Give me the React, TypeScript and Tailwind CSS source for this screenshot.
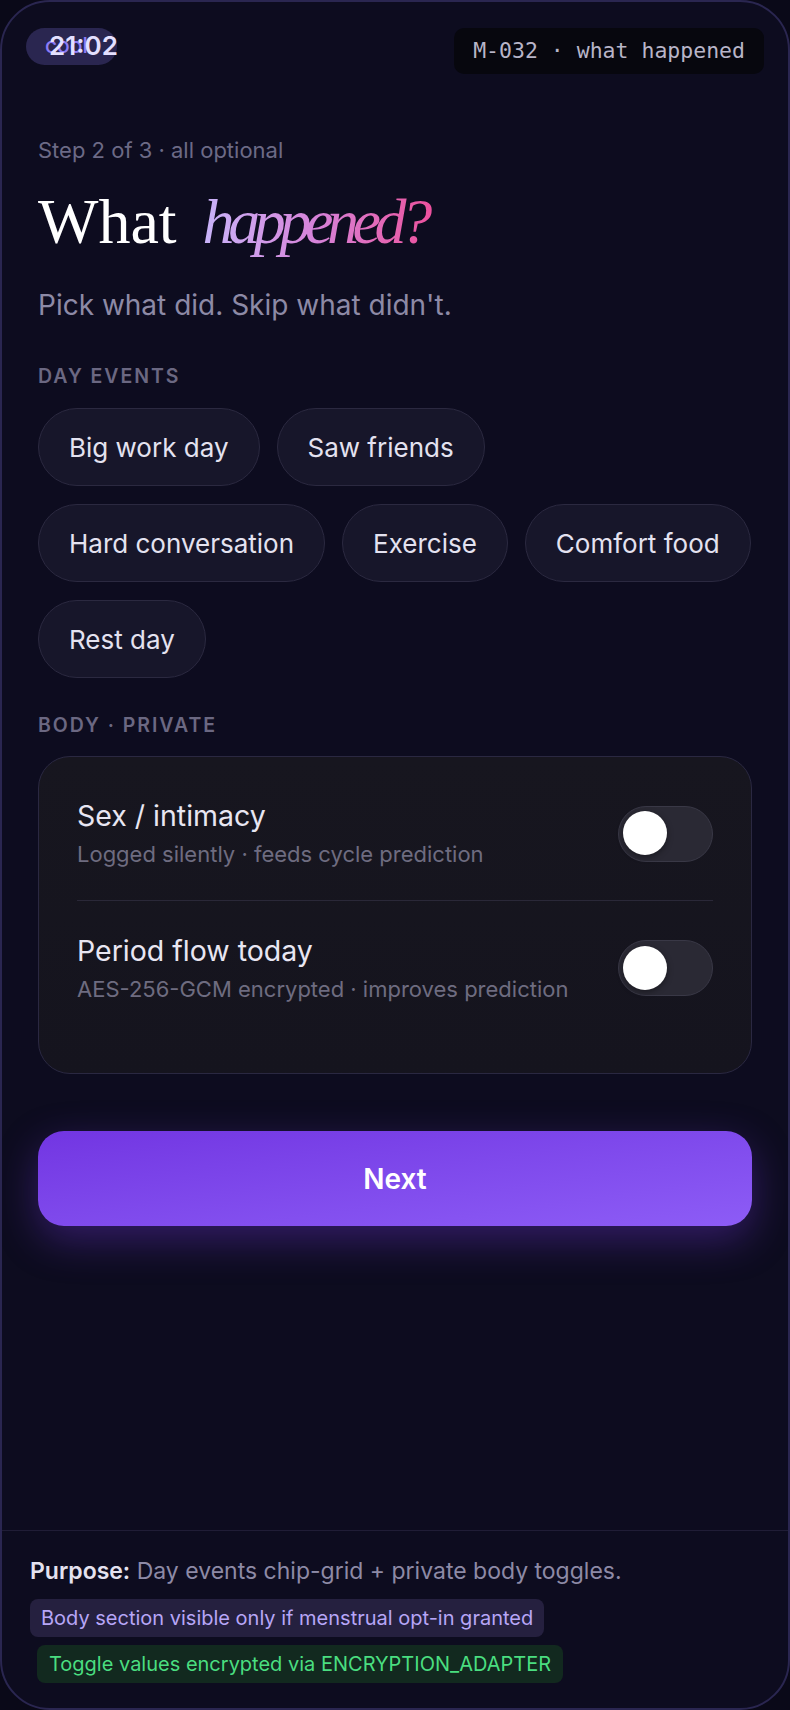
const EVENTS = [
  "Big work day",
  "Saw friends",
  "Hard conversation",
  "Exercise",
  "Comfort food",
  "Rest day",
];

const BODY = [
  { title: "Sex / intimacy", sub: "Logged silently · feeds cycle prediction" },
  { title: "Period flow today", sub: "AES-256-GCM encrypted · improves prediction" },
];

const sans = "font-['Inter','Noto_Sans',sans-serif]";

function Toggle() {
  return (
    <div className="relative h-[56px] w-[95px] shrink-0 rounded-full border-[1.5px] border-[#393846] bg-[#2a2934]">
      <span className="absolute left-[4px] top-[4.5px] h-[44px] w-[44px] rounded-full bg-white shadow-[0_2px_6px_rgba(0,0,0,0.4)]" />
    </div>
  );
}

export default function App() {
  return (
    <div className={`min-h-screen bg-[#0a0918] ${sans}`}>
      <div className="relative flex h-[1710px] w-[790px] flex-col overflow-hidden rounded-[50px] border-2 border-[#2a2650] bg-[#0d0c1f]">
        {/* status row */}
        <div className="flex items-start justify-between pl-[24px] pr-[24px] pt-[26px]">
          <div className="relative h-[37px] w-[91px] rounded-full bg-[#2a2650]">
            <span className="absolute left-[19px] top-[5px] text-[21px] font-medium leading-[26px] text-[#8b7cf6]">
              cool
            </span>
            <span className="absolute left-[23px] top-[2px] text-[26px] font-semibold leading-[32px] text-[#e4e0ff]">
              21:02
            </span>
          </div>
          <div className="flex h-[46px] items-center rounded-[10px] bg-[#07070e] px-[19px] font-['DejaVu_Sans_Mono',monospace] text-[21.5px] text-[#b8b5c8]">
            M-032 · what happened
          </div>
        </div>

        <main className="flex-1 px-[36px]">
          <p className="mt-[61px] text-[22px] leading-[30px] text-[#6c6a86]">
            Step 2 of 3 · all optional
          </p>
          <h1 className="mt-[21px] font-['Liberation_Serif',serif] text-[64px] font-normal leading-[72px] text-white">
            What{" "}
            <span className="ml-[10px] bg-gradient-to-r from-[#c8b4fa] via-[#d681d8] to-[#ec4f9c] bg-clip-text pr-[8px] italic tracking-[-0.1em] text-transparent">
              happened?
            </span>
          </h1>
          <p className="mt-[29px] text-[28px] leading-[36px] text-[#8d8aa6]">
            Pick what did. Skip what didn't.
          </p>

          <h2 className="mt-[41px] text-[19.5px] font-semibold uppercase leading-[24px] tracking-[0.1em] text-[#6b6882]">
            Day events
          </h2>
          <div className="mt-[20px] flex flex-wrap gap-x-[17px] gap-y-[18px]">
            {EVENTS.map((e) => (
              <button
                key={e}
                className="h-[78px] rounded-full border-[1.5px] border-[#2b2940] bg-[#17162a] px-[30px] text-[26px] text-[#e4e2f0]"
              >
                {e}
              </button>
            ))}
          </div>

          <h2 className="mt-[35px] text-[19.5px] font-semibold uppercase leading-[24px] tracking-[0.1em] text-[#6b6882]">
            Body · Private
          </h2>
          <div className="mt-[19px] rounded-[32px] border-[1.5px] border-[#2a2841] bg-gradient-to-b from-[#17161f] to-[#15141e] px-[38px] pb-[38px] pt-[10px]">
            {BODY.map((b, i) => (
              <div
                key={b.title}
                className={`flex h-[134px] items-center justify-between ${
                  i === 0 ? "border-b border-[#2a2838]" : ""
                }`}
              >
                <div>
                  <p className="text-[28.5px] leading-[36px] text-[#e8e6f2]">{b.title}</p>
                  <p className="mt-[5px] text-[22px] leading-[30px] text-[#6e6c80]">{b.sub}</p>
                </div>
                <Toggle />
              </div>
            ))}
          </div>

          <button className="mt-[57px] flex h-[95px] w-full items-center justify-center rounded-[26px] bg-gradient-to-br from-[#7235e2] to-[#8d5cf6] text-[28px] font-semibold text-white shadow-[0_14px_40px_rgba(124,58,237,0.35)]">
            Next
          </button>
        </main>

        <footer className="border-t border-[#201d36] px-[28px] pb-[25px] pt-[25px]">
          <p className="text-[23px] leading-[30px] text-[#8d8aa6]">
            <span className="font-semibold text-[#e4e2f0]">Purpose:</span> Day events chip-grid + private body toggles.
          </p>
          <div className="mt-[13px] flex flex-col items-start gap-[8px]">
            <span className="rounded-[8px] bg-[#25203f] px-[11px] py-[6px] text-[20px] leading-[26px] text-[#b7a6f7]">
              Body section visible only if menstrual opt-in granted
            </span>
            <span className="ml-[7px] rounded-[8px] bg-[#12291f] px-[12px] py-[6px] text-[20px] leading-[26px] text-[#4ade80]">
              Toggle values encrypted via ENCRYPTION_ADAPTER
            </span>
          </div>
        </footer>
      </div>
    </div>
  );
}
